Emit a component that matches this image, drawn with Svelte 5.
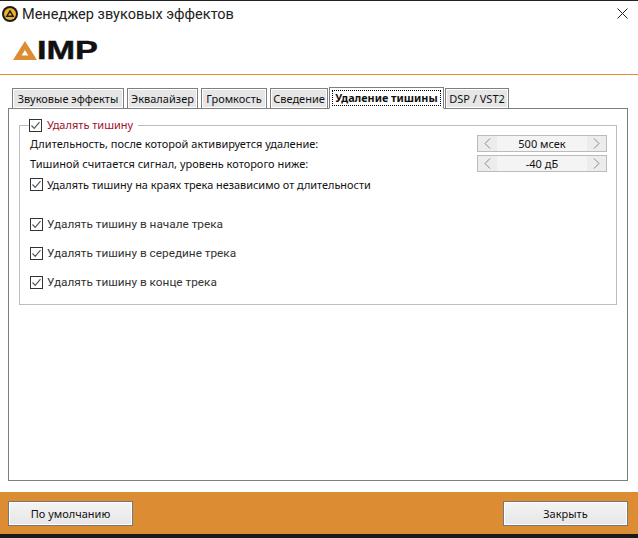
<script lang="ts">
  const tabs = [
    { label: 'Звуковые эффекты', width: 112 },
    { label: 'Эквалайзер', width: 71 },
    { label: 'Громкость', width: 66 },
    { label: 'Сведение', width: 58 },
    { label: 'Удаление тишины', width: 115, active: true },
    { label: 'DSP / VST2', width: 64 }
  ];

  const spinners = [
    { label: 'Длительность, после которой активируется удаление:', value: '500 мсек' },
    { label: 'Тишиной считается сигнал, уровень которого ниже:', value: '-40 дБ' }
  ];

  const positions = [
    'Удалять тишину в начале трека',
    'Удалять тишину в середине трека',
    'Удалять тишину в конце трека'
  ];
</script>

{#snippet check()}
  <svg class="check" width="13" height="13" viewBox="0 0 13 13">
    <rect x="0.5" y="0.5" width="12" height="12" fill="#fff" stroke="#333" />
    <path d="M2.5 6.5 L5.2 9.3 L10.5 3.2" fill="none" stroke="#555" stroke-width="1.2" />
  </svg>
{/snippet}

<div class="window">
  <header class="titlebar">
    <svg class="app-icon" width="16" height="16" viewBox="0 0 16 16">
      <circle cx="8" cy="8" r="8" fill="#1c1c1c" />
      <circle cx="8" cy="8" r="6" fill="#eeb32b" />
      <path d="M8 3.6 L12.4 11 H3.6 Z M8 6.4 L6 9.6 H10 Z" fill="#1c1c1c" fill-rule="evenodd" />
    </svg>
    <span class="title">Менеджер звуковых эффектов</span>
    <svg class="close" width="11" height="11" viewBox="0 0 11 11">
      <path d="M0.5 0.5 L10.5 10.5 M10.5 0.5 L0.5 10.5" stroke="#222" stroke-width="1" fill="none" />
    </svg>
  </header>

  <div class="logo">
    <svg width="24" height="19" viewBox="0 0 24 19">
      <path d="M12 0 L24 19 H0 Z M12 9 L8.6 14.5 H15.4 Z" fill="#dc8c32" fill-rule="evenodd" />
    </svg>
    <span class="logo-text">IMP</span>
  </div>

  <main class="content">
    <div class="tabs">
      {#each tabs as tab}
        <div class="tab" class:active={tab.active} style="width: {tab.width}px">
          <span class="tab-label">{tab.label}</span>
        </div>
      {/each}
    </div>

    <section class="panel">
      <fieldset class="group">
        <legend class="legend">
          {@render check()}
          <span class="red">Удалять тишину</span>
        </legend>

        {#each spinners as s}
          <div class="row">
            <span>{s.label}</span>
            <div class="spinner">
              <span class="arrow">
                <svg width="7" height="11" viewBox="0 0 7 11"><path d="M6 0.5 L1 5.5 L6 10.5" fill="none" stroke="#888" /></svg>
              </span>
              <span class="value">{s.value}</span>
              <span class="arrow">
                <svg width="7" height="11" viewBox="0 0 7 11"><path d="M1 0.5 L6 5.5 L1 10.5" fill="none" stroke="#888" /></svg>
              </span>
            </div>
          </div>
        {/each}

        <div class="option edges">
          {@render check()}
          <span>Удалять тишину на краях трека независимо от длительности</span>
        </div>

        <div class="positions">
          {#each positions as p}
            <div class="option">
              {@render check()}
              <span>{p}</span>
            </div>
          {/each}
        </div>
      </fieldset>
    </section>
  </main>

  <footer class="footer">
    <button class="btn">По умолчанию</button>
    <button class="btn">Закрыть</button>
  </footer>
  <div class="taskbar"></div>
</div>

<style>
  :global(body) {
    margin: 0;
    background: #fff;
  }

  .window {
    width: 638px;
    height: 538px;
    display: flex;
    flex-direction: column;
    overflow: hidden;
    font-family: "Noto Sans", "Liberation Sans", sans-serif;
    font-size: 11px;
    color: #111;
  }

  .titlebar {
    height: 29px;
    box-sizing: border-box;
    border-top: 1px solid #222;
    padding: 5px 0 0 2px;
    display: flex;
    align-items: flex-start;
  }

  .title {
    margin-left: 4px;
    font-family: "Roboto", sans-serif;
    font-size: 14.5px;
    line-height: 17px;
    color: #222;
  }

  .close {
    margin: 2px 10px 0 auto;
  }

  .logo {
    height: 46px;
    box-sizing: border-box;
    padding: 12px 0 0 13px;
    border-bottom: 1px solid #dc8c32;
    display: flex;
    align-items: flex-start;
    flex: none;
  }

  .logo-text {
    font-family: "Liberation Sans", sans-serif;
    font-weight: 700;
    font-size: 26px;
    line-height: 19px;
    height: 19px;
    color: #111;
    -webkit-text-stroke: 0.4px #111;
    transform: scaleX(1.32);
    transform-origin: left center;
  }

  .content {
    flex: 1;
    min-height: 0;
    padding: 12px 10px 11px 8px;
    display: flex;
    flex-direction: column;
  }

  .tabs {
    display: flex;
    align-items: flex-end;
    padding-left: 4px;
    gap: 3px;
    height: 22px;
    flex: none;
    position: relative;
    z-index: 1;
    margin-bottom: -1px;
  }

  .tab {
    height: 21px;
    box-sizing: border-box;
    border: 1px solid #7f7f7f;
    outline: 1px solid #fff;
    outline-offset: -2px;
    background: #e6e6e6;
    display: flex;
    align-items: center;
    justify-content: center;
    white-space: nowrap;
    flex: none;
  }

  .tab.active {
    height: 22px;
    background: #fff;
    outline: none;
    border-bottom-color: #fff;
    font-weight: 700;
    font-size: 10.8px;
    margin: 0 -2px;
  }

  .tab.active .tab-label {
    border: 1px dotted #000;
    padding: 0 2px;
    line-height: 14px;
  }

  .panel {
    flex: 1;
    border: 1px solid #7f7f7f;
    background: #fff;
    padding: 9px 10px 0;
    min-height: 0;
  }

  .group {
    margin: 0;
    height: 187px;
    box-sizing: border-box;
    border: 1px solid #bdbdbd;
    padding: 0 9px 0 10px;
  }

  .legend {
    display: flex;
    align-items: center;
    gap: 5px;
    padding: 0 5px 0 0;
    margin-left: -1px;
    height: 14px;
    line-height: 14px;
  }

  .red {
    color: #a0102a;
  }

  .check {
    display: block;
    flex: none;
  }

  .row {
    height: 20px;
    display: flex;
    align-items: center;
    justify-content: space-between;
  }

  .row:first-of-type {
    margin-top: 1px;
  }

  .spinner {
    width: 130px;
    height: 17px;
    box-sizing: border-box;
    border: 1px solid #bbb;
    display: flex;
    align-items: center;
    background: #f4f4f4;
  }

  .arrow {
    width: 19px;
    height: 100%;
    background: #ececec;
    display: flex;
    align-items: center;
    justify-content: center;
  }

  .value {
    flex: 1;
    text-align: center;
  }

  .option {
    display: flex;
    align-items: center;
    gap: 4px;
    height: 20px;
  }

  .edges {
    margin-top: 1px;
    font-size: 10.9px;
  }

  .positions {
    margin-top: 20px;
    display: flex;
    flex-direction: column;
    gap: 9px;
    font-family: "Roboto", sans-serif;
    font-size: 11.8px;
    color: #333;
  }

  .footer {
    height: 42px;
    flex: none;
    box-sizing: border-box;
    background: #dc8c32;
    padding: 9px 10px 8px 8px;
    display: flex;
    justify-content: space-between;
  }

  .btn {
    width: 125px;
    height: 25px;
    box-sizing: border-box;
    padding: 0;
    border: 1px solid #777;
    box-shadow: inset 0 0 0 1px #fff;
    background: linear-gradient(#f4f4f4, #e6e6e6);
    font: inherit;
    color: #111;
  }

  .taskbar {
    height: 4px;
    flex: none;
    background: #1a1a1a;
  }
</style>
